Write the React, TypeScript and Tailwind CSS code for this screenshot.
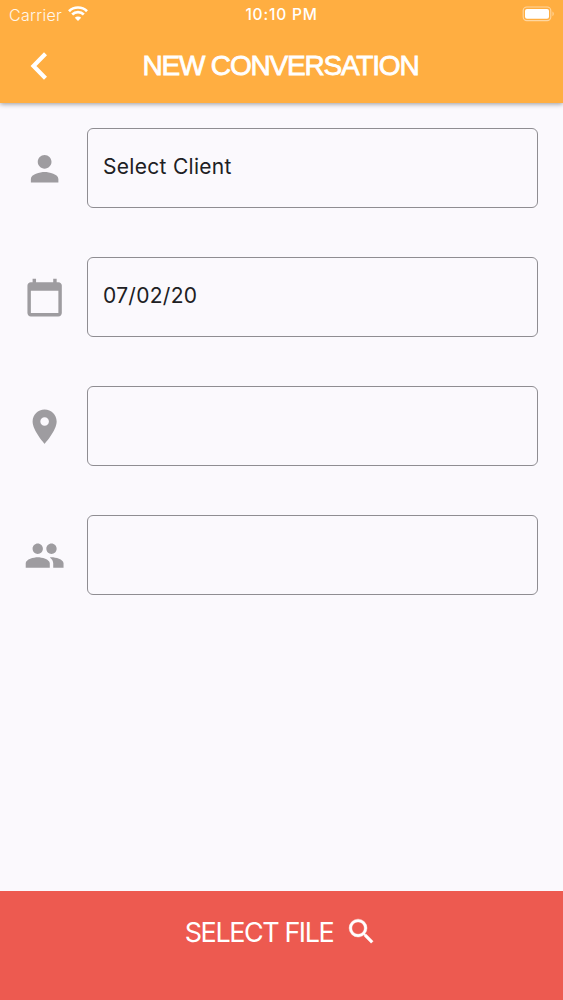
import type { ReactNode } from 'react'

const fields = [
  {
    label: 'Client',
    value: 'Select Client',
    icon: 'M12 12c2.21 0 4-1.79 4-4s-1.79-4-4-4-4 1.79-4 4 1.79 4 4 4zm0 2c-2.67 0-8 1.34-8 4v2h16v-2c0-2.66-5.33-4-8-4z'
  },
  {
    label: 'Date',
    value: '07/02/20',
    icon: 'M20 3h-1V1h-2v2H7V1H5v2H4c-1.1 0-2 .9-2 2v16c0 1.1.9 2 2 2h16c1.1 0 2-.9 2-2V5c0-1.1-.9-2-2-2zm0 18H4V8h16v13z'
  },
  {
    label: 'Location',
    value: '',
    icon: 'M12 2C8.13 2 5 5.13 5 9c0 5.25 7 13 7 13s7-7.75 7-13c0-3.87-3.13-7-7-7zm0 9.5c-1.38 0-2.5-1.12-2.5-2.5s1.12-2.5 2.5-2.5 2.5 1.12 2.5 2.5-1.12 2.5-2.5 2.5z'
  },
  {
    label: 'Participants',
    value: '',
    icon: 'M16 11c1.66 0 2.99-1.34 2.99-3S17.66 5 16 5s-3 1.34-3 3 1.34 3 3 3zm-8 0c1.66 0 2.99-1.34 2.99-3S9.66 5 8 5 5 6.34 5 8s1.34 3 3 3zm0 2c-2.33 0-7 1.17-7 3.5V19h14v-2.5c0-2.33-4.67-3.5-7-3.5zm8 0c-.29 0-.62.02-.97.05 1.16.84 1.97 1.97 1.97 3.45V19h6v-2.5c0-2.33-4.67-3.5-7-3.5z'
  }
]

function StatusBar() {
  return (
    <div className="grid h-7 grid-cols-3 items-center pl-[9px] pr-[9px] text-white">
      <div className="flex items-center gap-[6px]">
        <span className="pt-px text-[16px] font-light tracking-[0.3px] text-white/90">Carrier</span>
        {/* Wifi */}
        <svg width="20" height="15" viewBox="0 0 20 15" className="-mt-px" fill="none" stroke="currentColor" strokeWidth="2.7">
          <path d="M1 5.2a12.8 12.8 0 0 1 18 0" />
          <path d="M4.2 8.5a8.3 8.3 0 0 1 11.6 0" />
          <path d="M10 15l-3.2-3.3a4.6 4.6 0 0 1 6.4 0z" fill="currentColor" stroke="none" />
        </svg>
      </div>
      <span className="pt-[2px] text-center text-[15.5px] font-medium tracking-[0.8px] whitespace-nowrap">10:10 PM</span>
      {/* Battery */}
      <svg className="justify-self-end" width="32" height="16" viewBox="0 0 32 16">
        <rect x="1.2" y="1" width="27.6" height="13.6" rx="3.6" fill="none" stroke="white" strokeOpacity="0.5" strokeWidth="1.1" />
        <rect x="3" y="3" width="24" height="9.8" rx="2" fill="white" />
        <path d="M30.5 5.5c1.6.7 1.6 4 0 4.7z" fill="white" fillOpacity="0.5" />
      </svg>
    </div>
  )
}

function Header() {
  return (
    <header className="z-10 h-[103px] shrink-0 bg-[#ffae41] shadow-[0_1px_5px_rgba(0,0,0,0.4)]">
      <StatusBar />
      <div className="flex h-[75px] items-center text-white">
        <button aria-label="Back" className="flex w-[77px] justify-center">
          <svg width="18" height="28" viewBox="0 0 18 28" fill="none" stroke="currentColor" strokeWidth="4.2">
            <path d="M15.5 1.8L3.5 14l12 12.2" />
          </svg>
        </button>
        <h1 className="flex-1 text-center font-['Liberation_Sans',sans-serif] text-[28px] tracking-[-1.2px] whitespace-nowrap [-webkit-text-stroke:0.8px_white]">
          NEW CONVERSATION
        </h1>
        <div className="w-[79px]" />
      </div>
    </header>
  )
}

function FieldRow({ icon, label, children }: { icon: string; label: string; children: ReactNode }) {
  return (
    <div className="flex h-20 items-center">
      <div className="flex w-[63px] shrink-0 pt-px pl-[0.4px]">
        <svg width="41.25" height="41.25" viewBox="0 0 24 24" fill="#9e9ca0">
          <path d={icon} />
        </svg>
      </div>
      <button
        aria-label={label}
        className="flex h-20 flex-1 items-center rounded-[6px] border border-[#8f8d92] px-[15px] pb-[2px] text-left text-[21px] tracking-[0.3px] text-[#202023]"
      >
        {children}
      </button>
    </div>
  )
}

export default function App() {
  return (
    <div className="flex h-[1000px] w-[563px] flex-col overflow-hidden bg-[#fbf9fd] font-['Inter',sans-serif]">
      <Header />
      <main className="flex flex-1 flex-col gap-[49px] pt-[25px] pr-[25px] pl-[24px]">
        {fields.map((field) => (
          <FieldRow key={field.label} icon={field.icon} label={field.label}>
            {field.value}
          </FieldRow>
        ))}
      </main>
      <button className="flex h-[109px] shrink-0 justify-center gap-[12px] bg-[#ed5a50] pt-[24px] text-white">
        <span className="text-[27px] leading-[35px] tracking-[-1.45px]">SELECT FILE</span>
        <svg width="33" height="33" viewBox="0 0 24 24" fill="currentColor" stroke="currentColor" strokeWidth="0.3">
          <path d="M15.5 14h-.79l-.28-.27A6.471 6.471 0 0 0 16 9.5 6.5 6.5 0 1 0 9.5 16c1.61 0 3.09-.59 4.23-1.57l.27.28v.79l5 4.99L20.49 19l-4.99-5zm-6 0C7.01 14 5 11.99 5 9.5S7.01 5 9.5 5 14 7.01 14 9.5 11.99 14 9.5 14z" />
        </svg>
      </button>
    </div>
  )
}
